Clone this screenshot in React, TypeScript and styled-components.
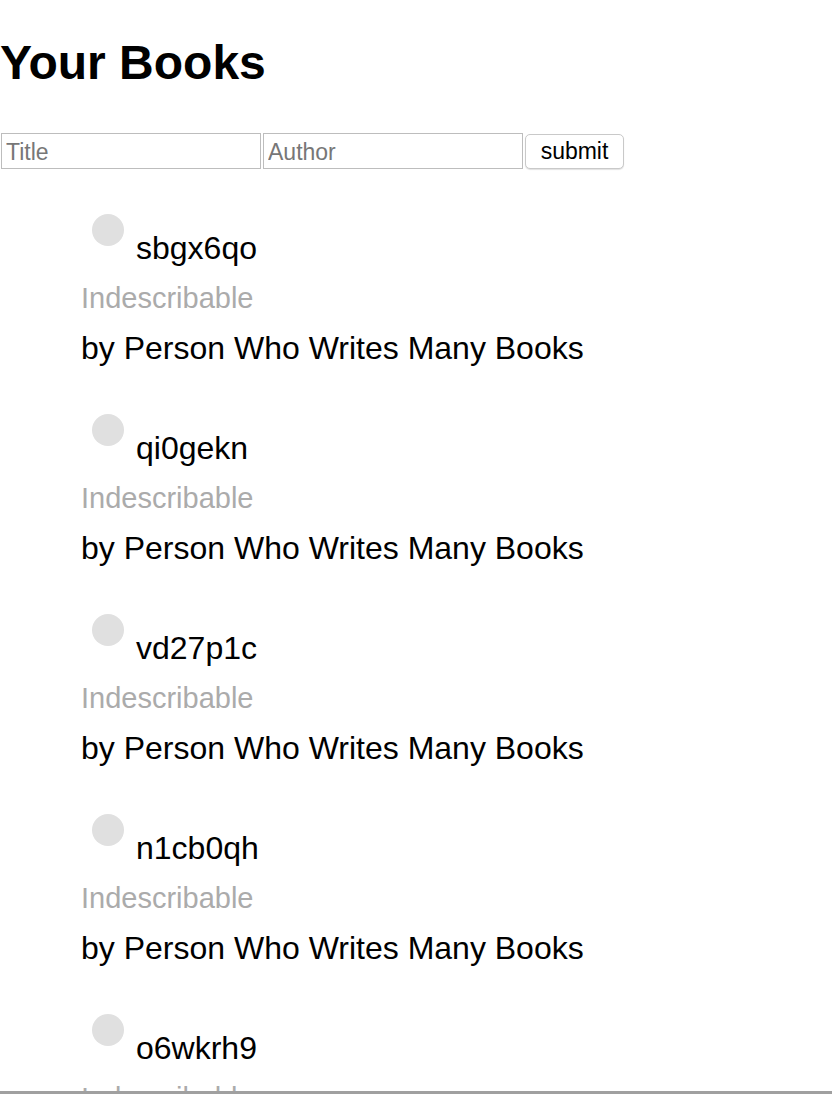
import React from "react";
import styled, { createGlobalStyle } from "styled-components";

const GlobalStyle = createGlobalStyle`
  html, body {
    margin: 0;
    padding: 0;
    background: #ffffff;
    font-family: "Liberation Sans", Arial, Helvetica, sans-serif;
    color: #000;
  }
`;

const Page = styled.div`
  display: flex;
  flex-direction: column;
`;

const Heading = styled.h1`
  margin: 35px 0 0 0;
  font-size: 48px;
  font-weight: 700;
  line-height: 55px;
`;

const Form = styled.form`
  display: flex;
  align-items: flex-start;
  gap: 2px;
  margin: 43px 0 0 1px;
`;

const Input = styled.input`
  box-sizing: border-box;
  width: 260px;
  height: 36px;
  border: 1px solid #bdbdbd;
  padding: 2px 4px 0;
  font-family: "Liberation Sans", Arial, sans-serif;
  font-size: 23px;
  color: #000;
  outline: none;
  &::placeholder {
    color: #777;
  }
`;

const Button = styled.button`
  box-sizing: border-box;
  width: 99px;
  height: 35px;
  margin-top: 1px;
  background: #fff;
  border: 1px solid #c9c9c9;
  border-radius: 5px;
  box-shadow: 0 1px 1px rgba(0, 0, 0, 0.12);
  font-family: "Liberation Sans", Arial, sans-serif;
  font-size: 23px;
  color: #000;
  padding: 0;
`;

const List = styled.ul`
  list-style: none;
  margin: 45px 0 0 0;
  padding: 0 0 0 81px;
  display: flex;
  flex-direction: column;
  gap: 41px;
`;

const Item = styled.li`
  display: flex;
  flex-direction: column;
`;

const TitleRow = styled.div`
  display: flex;
  align-items: flex-start;
  gap: 12px;
  padding-left: 11px;
`;

const Dot = styled.span`
  width: 32px;
  height: 32px;
  border-radius: 50%;
  background: #e0e0e0;
  flex: none;
`;

const Title = styled.span`
  margin-top: 9px;
  font-size: 32px;
  line-height: 50px;
`;

const Description = styled.div`
  font-size: 29px;
  line-height: 50px;
  color: #ababab;
`;

const Author = styled.div`
  font-size: 32px;
  line-height: 50px;
`;

const BottomEdge = styled.div`
  position: fixed;
  left: 0;
  right: 0;
  bottom: 0;
  height: 3px;
  background: #a0a0a0;
`;

const books = ["sbgx6qo", "qi0gekn", "vd27p1c", "n1cb0qh", "o6wkrh9"];

export default function App() {
  return (
    <Page>
      <GlobalStyle />
      <Heading>Your Books</Heading>
      <Form onSubmit={(e) => e.preventDefault()}>
        <Input placeholder="Title" />
        <Input placeholder="Author" />
        <Button type="submit">submit</Button>
      </Form>
      <List>
        {books.map((id) => (
          <Item key={id}>
            <TitleRow>
              <Dot />
              <Title>{id}</Title>
            </TitleRow>
            <Description>Indescribable</Description>
            <Author>by Person Who Writes Many Books</Author>
          </Item>
        ))}
      </List>
      <BottomEdge />
    </Page>
  );
}
